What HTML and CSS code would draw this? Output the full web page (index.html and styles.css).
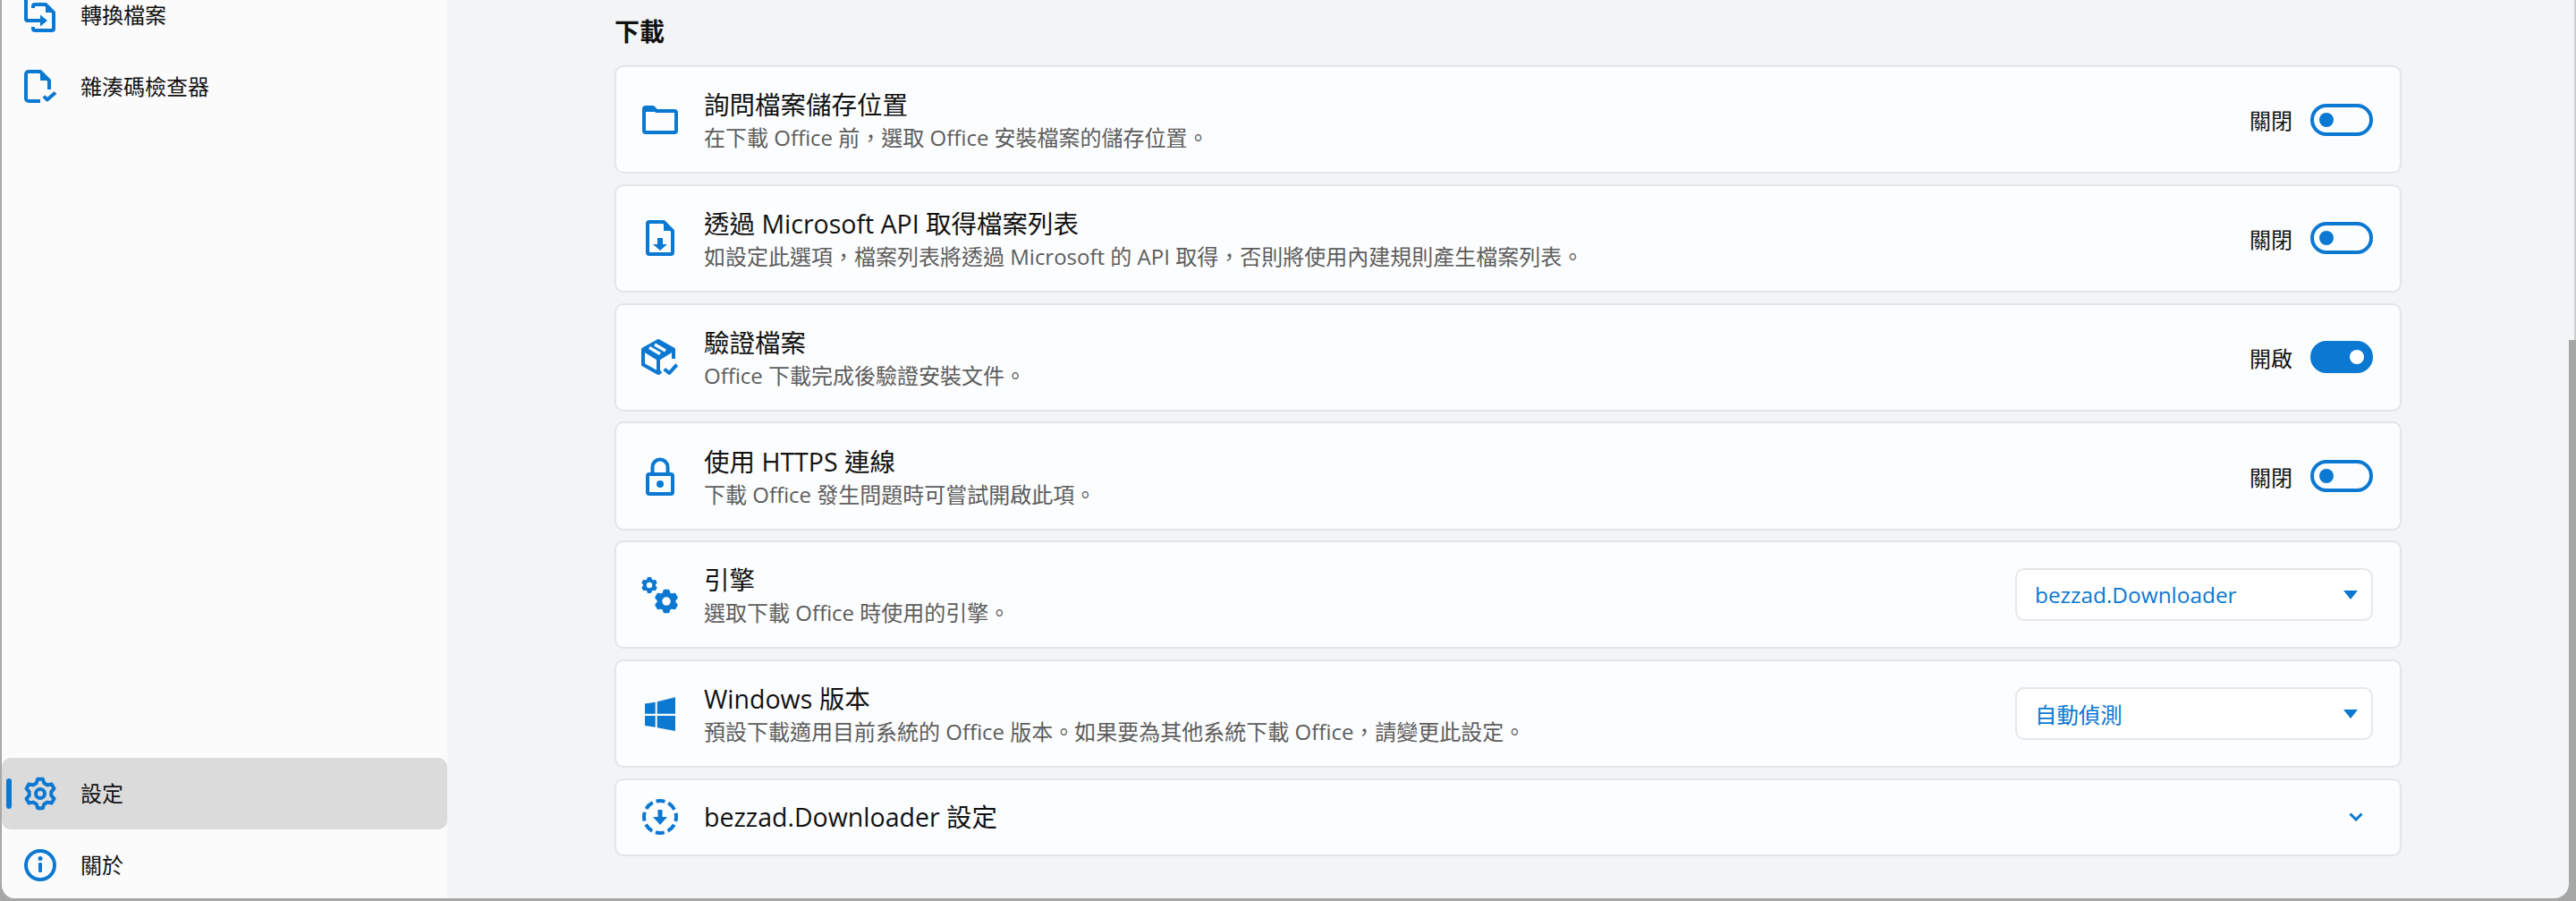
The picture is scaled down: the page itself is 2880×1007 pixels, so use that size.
FILE: index.html
```html
<!DOCTYPE html>
<html lang="zh-Hant">
<head>
<meta charset="utf-8">
<title>設定</title>
<link rel="stylesheet" href="styles.css">
</head>
<body>
<div class="window">
  <nav class="sidebar">
    <div class="nav-top">
      <a class="nav-item">
        <svg class="icon" viewBox="0 0 48 48"><path class="s" d="M16 16V14a2 2 0 0 1 2-2H30l9 9V39a2 2 0 0 1-2 2H18a2 2 0 0 1-2-2V37"/><path class="f" d="M30 10.500 40.500 21H30z"/><path class="s" d="M8 0V28a2 2 0 0 0 2 2H25"/><path class="f" d="M24 23.500 32 30 24 36.500z"/></svg>
        <span>轉換檔案</span>
      </a>
      <a class="nav-item">
        <svg class="icon" viewBox="0 0 48 48"><path class="s" d="M24 40H11a3 3 0 0 1-3-3V10a3 3 0 0 1 3-3H24L34 17V27"/><path class="f" d="M24 6 35 17H24z"/><path class="s" d="M28 34.500 31.700 38.500 41 30.500"/></svg>
        <span>雜湊碼檢查器</span>
      </a>
    </div>
    <div class="nav-bottom">
      <a class="nav-item active">
        <svg class="icon" viewBox="0 0 48 48"><polygon class="s" points="19.72,12.25 21.13,7.75 26.87,7.75 28.28,12.25 32.04,14.42 36.64,13.39 39.5,18.36 36.31,21.83 36.31,26.17 39.5,29.64 36.64,34.61 32.04,33.58 28.28,35.75 26.87,40.25 21.13,40.25 19.72,35.75 15.96,33.58 11.36,34.61 8.5,29.64 11.69,26.17 11.69,21.83 8.5,18.36 11.36,13.39 15.96,14.42"/><circle class="s" cx="24" cy="24" r="5"/></svg>
        <span>設定</span>
      </a>
      <a class="nav-item">
        <svg class="icon" viewBox="0 0 48 48"><circle class="s" cx="24" cy="24" r="16"/><circle class="f" cx="24" cy="16.500" r="2.500"/><rect class="f" x="22" y="21" width="4" height="11" rx="1.500"/></svg>
        <span>關於</span>
      </a>
    </div>
  </nav>
  <main class="content">
    <h2 class="section-title">下載</h2>
    <div class="cards">
      <section class="card">
        <svg class="icon" viewBox="0 0 48 48"><path class="s" d="M6 14V12a2 2 0 0 1 2-2h8l4 4H40a2 2 0 0 1 2 2V36a2 2 0 0 1-2 2H8a2 2 0 0 1-2-2z"/><path class="f" d="M6 10H16l5 5H6z"/></svg>
        <div class="card-text"><div class="card-title">詢問檔案儲存位置</div><div class="card-sub">在下載 Office 前，選取 Office 安裝檔案的儲存位置。</div></div>
        <div class="switch-wrap"><span class="switch-label">關閉</span><span class="switch"></span></div>
      </section>
      <section class="card">
        <svg class="icon" viewBox="0 0 48 48"><path class="s" d="M10 8a2 2 0 0 1 2-2H28L38 16V40a2 2 0 0 1-2 2H12a2 2 0 0 1-2-2z"/><path class="f" d="M28 5 39 16H28z"/><path class="f" d="M21 24H27V31H32L24 38 16 31H21z"/></svg>
        <div class="card-text"><div class="card-title">透過 Microsoft API 取得檔案列表</div><div class="card-sub">如設定此選項，檔案列表將透過 Microsoft 的 API 取得，否則將使用內建規則產生檔案列表。</div></div>
        <div class="switch-wrap"><span class="switch-label">關閉</span><span class="switch"></span></div>
      </section>
      <section class="card">
        <svg class="icon" viewBox="0 0 48 48"><path class="s" d="M39 26V15.500L22 6 5 15.500V32.500L22 42 25 40"/><path class="s" d="M5 15.500 22 26 39 15.500M22 26V42"/><path class="f" d="M22 5 40 15.500 22 26 4 15.500z"/><path class="w" d="M12 13.500 24 20.500M18 10 30 17"/><path class="s" d="M28.700 37.500 34.300 42 42.700 32.700"/></svg>
        <div class="card-text"><div class="card-title">驗證檔案</div><div class="card-sub">Office 下載完成後驗證安裝文件。</div></div>
        <div class="switch-wrap"><span class="switch-label">開啟</span><span class="switch on"></span></div>
      </section>
      <section class="card">
        <svg class="icon" viewBox="0 0 48 48"><rect class="s" x="10" y="22" width="28" height="22" rx="2"/><path class="s" d="M15.500 22V14a8.500 8.500 0 0 1 17 0V22"/><circle class="f" cx="24" cy="33" r="4"/></svg>
        <div class="card-text"><div class="card-title">使用 HTTPS 連線</div><div class="card-sub">下載 Office 發生問題時可嘗試開啟此項。</div></div>
        <div class="switch-wrap"><span class="switch-label">關閉</span><span class="switch"></span></div>
      </section>
      <section class="card">
        <svg class="icon" viewBox="0 0 48 48">
          <defs><g id="gear"><polygon class="gf" points="19.72,12.25 21.13,7.75 26.87,7.75 28.28,12.25 32.04,14.42 36.64,13.39 39.5,18.36 36.31,21.83 36.31,26.17 39.5,29.64 36.64,34.61 32.04,33.58 28.28,35.75 26.87,40.25 21.13,40.25 19.72,35.75 15.96,33.58 11.36,34.61 8.5,29.64 11.69,26.17 11.69,21.83 8.5,18.36 11.36,13.39 15.96,14.42"/><circle class="hole" cx="24" cy="24" r="6.500"/></g></defs>
          <use href="#gear" transform="translate(0.3 1.300) scale(.488)"/>
          <use href="#gear" transform="translate(13.500 13.500) scale(.73)"/>
        </svg>
        <div class="card-text"><div class="card-title">引擎</div><div class="card-sub">選取下載 Office 時使用的引擎。</div></div>
        <div class="select"><span>bezzad.Downloader</span><svg class="caret" viewBox="0 0 16 10"><path class="f" d="M0 0H16L8 10z"/></svg></div>
      </section>
      <section class="card">
        <svg class="icon" viewBox="0 0 48 48"><path class="f" d="M7 12.500 18.700 10.800V23.700H7zM20.700 10.300 41 5.300V23.700H20.700zM7 26H18.700V38.800L7 37zM20.700 26H41V43L20.700 39.200z"/></svg>
        <div class="card-text"><div class="card-title">Windows 版本</div><div class="card-sub">預設下載適用目前系統的 Office 版本。如果要為其他系統下載 Office，請變更此設定。</div></div>
        <div class="select"><span>自動偵測</span><svg class="caret" viewBox="0 0 16 10"><path class="f" d="M0 0H16L8 10z"/></svg></div>
      </section>
      <section class="card card-short">
        <svg class="icon" viewBox="0 0 48 48"><circle class="s dash" cx="24" cy="24" r="18"/><path class="f" d="M21.500 16H26.500V24H32L24 33 16 24H21.500z"/></svg>
        <div class="card-text"><div class="card-title">bezzad.Downloader 設定</div></div>
        <svg class="chevron" viewBox="0 0 16 10"><path d="M1.500 1.500 8 8 14.500 1.500"/></svg>
      </section>
    </div>
  </main>
</div>
<div class="edge"></div>
</body>
</html>
```

FILE: styles.css
```css
* { box-sizing: border-box; }
html, body { margin: 0; height: 100%; overflow: hidden; background: #a6a6a6; }
body { font-family: "Open Sans", "Noto Sans CJK TC", sans-serif; color: #111; }
.window {
  display: flex;
  width: 2872px;
  height: 1004px;
  border-left: 2px solid #a9a9a9;
  border-radius: 0 0 16px 16px;
  overflow: hidden;
  background: #f3f4f6;
}
.edge {
  position: absolute;
  top: 0;
  right: 0;
  width: 8px;
  height: 380px;
  background: #f3f4f6;
  border-right: 2px solid #cfcfd1;
}
.sidebar {
  flex: 0 0 498px;
  background: #fbfbfc;
  display: flex;
  flex-direction: column;
  justify-content: space-between;
}
.nav-top { margin-top: -23px; }
.nav-bottom { margin-bottom: -3px; }
.nav-item {
  position: relative;
  display: flex;
  align-items: center;
  gap: 21px;
  height: 80px;
  padding-left: 19px;
  font-size: 24px;
  border-radius: 10px;
}
.nav-item span { position: relative; top: -2px; }
.nav-item.active { background: #dbdbdc; }
.nav-item.active::before {
  content: "";
  position: absolute;
  left: 5px;
  top: 23px;
  width: 6px;
  height: 34px;
  border-radius: 3px;
  background: #0b78d2;
}
.icon { width: 48px; height: 48px; flex: none; }
.s { fill: none; stroke: #0b78d2; stroke-width: 4; stroke-linejoin: round; }
.f { fill: #0b78d2; }
.w { fill: none; stroke: #fcfdfe; stroke-width: 3.500; }
.gf { fill: #0b78d2; stroke: #0b78d2; stroke-width: 4; stroke-linejoin: round; }
.hole { fill: #fcfdfe; }
.dash { stroke-dasharray: 10 4.130; stroke-dashoffset: 5; }
.content { flex: 1; padding-left: 187px; }
.section-title {
  margin: 0;
  height: 73px;
  padding-top: 15px;
  font-size: 28px;
  line-height: 40px;
  font-weight: 700;
}
.cards { display: flex; flex-direction: column; gap: 11.500px; width: 1998px; }
.card {
  display: flex;
  align-items: center;
  height: 121.300px;
  padding: 0 30px 0 25px;
  background: #fcfdfe;
  border: 2px solid #e4e5e8;
  border-radius: 10px;
}
.card-short { height: 87px; }
.card-text { flex: 1; padding-left: 25px; margin-top: 3px; }
.card-short .card-text { margin-top: 0; }
.card-title { font-size: 28.500px; line-height: 38px; }
.card-sub { font-size: 24px; line-height: 36px; color: #5d5d5d; }
.switch-wrap { display: flex; align-items: center; gap: 20px; }
.switch-label { font-size: 24px; }
.switch {
  position: relative;
  width: 70px;
  height: 36px;
  border: 4px solid #0b78d2;
  border-radius: 18px;
}
.switch::after {
  content: "";
  position: absolute;
  left: 6px;
  top: 6px;
  width: 16px;
  height: 16px;
  border-radius: 50%;
  background: #0b78d2;
}
.switch.on { background: #0b78d2; }
.switch.on::after { left: auto; right: 6px; background: #fff; }
.select {
  display: flex;
  align-items: center;
  justify-content: space-between;
  width: 400px;
  height: 59px;
  padding: 0 15px 0 20px;
  font-size: 24.400px;
  color: #0b78d2;
  background: #fff;
  border: 2px solid #e6e7ea;
  border-radius: 10px;
}
.caret { width: 16px; height: 10px; }
.chevron { width: 16px; height: 10px; margin-right: 11px; }
.chevron path { fill: none; stroke: #0b78d2; stroke-width: 3; }
```
